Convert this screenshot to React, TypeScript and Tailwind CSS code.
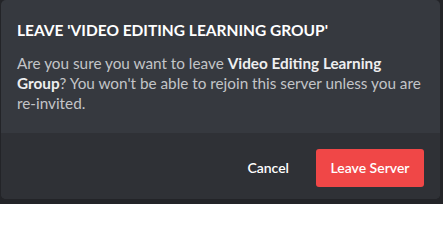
import React from "react";

export default function App() {
  return (
    <div className="w-[443px] h-[204px] bg-[#232428] pl-px pr-[3px] pb-[5px] overflow-hidden" style={{ fontFamily: "Lato, 'Open Sans', sans-serif" }}>
      <div className="h-full flex flex-col rounded-[5px] bg-[#36393f] overflow-hidden">
        <div className="h-[133px] shrink-0 px-4 pt-[20px]">
          <h1 className="text-[15.5px] leading-[20px] font-bold uppercase text-white">
            Leave 'Video Editing Learning Group'
          </h1>
          <p className="mt-[13px] text-[15.3px] leading-[20px] text-[#c3c5c8]">
            Are you sure you want to leave <strong className="font-bold text-[#eeeff0]">Video Editing Learning Group</strong>? You won't be able to rejoin this server unless you are re-invited.
          </p>
        </div>
        <div className="flex-1 bg-[#2f3136] flex items-start justify-end px-4 pt-4 gap-[27px]">
          <button className="h-[38px] text-[14px] font-semibold text-white leading-4">Cancel</button>
          <button className="h-[38px] w-[108px] rounded-[3px] bg-[#f04747] text-[14px] font-semibold text-white leading-4">
            Leave Server
          </button>
        </div>
      </div>
    </div>
  );
}
